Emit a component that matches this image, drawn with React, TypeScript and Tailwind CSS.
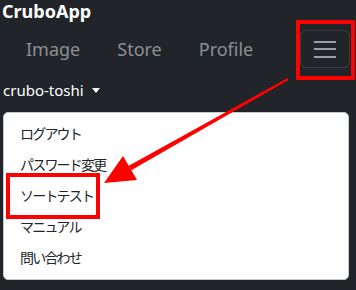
import React from 'react';

const menuItems = ['ログアウト', 'パスワード変更', 'ソートテスト', 'マニュアル', '問い合わせ'];
const navItems = ['Image', 'Store', 'Profile'];

// Red annotation: boxes and arrow drawn over the screenshot
function Annotation() {
  return (
    <svg className="pointer-events-none absolute inset-0" width="356" height="290" viewBox="0 0 356 290">
      <rect x="298" y="22" width="55" height="56" fill="none" stroke="#ff0000" strokeWidth="4" />
      <rect x="8" y="175" width="90" height="42" fill="none" stroke="#ff0000" strokeWidth="4" />
      <polygon points="288.5,79.9 287.5,78.1 128.8,165.8 131.2,170.2" fill="#ff0000" />
      <polygon points="104,183 123,156 137,180" fill="#ff0000" />
    </svg>
  );
}

export default function App() {
  return (
    <div
      className="relative flex h-[290px] w-[356px] flex-col overflow-hidden bg-[#212529] text-white"
      style={{ fontFamily: '"Noto Sans", "Noto Sans CJK JP", sans-serif' }}
    >
      {/* Brand */}
      <div className="h-[22px] pl-[2px] text-[18px] font-bold leading-[22px] text-white">CruboApp</div>

      {/* Nav row with toggler */}
      <div className="mt-[8px] flex h-[38px] items-center">
        <nav className="flex items-center gap-[37px] pl-[26px] text-[18px] text-[#8c8f93]">
          {navItems.map( ( item ) => (
            <span key={item}>{item}</span>
          ) )}
        </nav>
        <button className="ml-auto mr-[6px] flex h-[38px] w-[50px] flex-col items-center justify-center gap-[5.5px] rounded-[6px] border border-white/10">
          <span className="h-[2px] w-[22px] bg-[#9a9da1]" />
          <span className="h-[2px] w-[22px] bg-[#9a9da1]" />
          <span className="h-[2px] w-[22px] bg-[#9a9da1]" />
        </button>
      </div>

      {/* User dropdown toggle */}
      <div className="mt-[12px] flex h-[20px] items-center gap-[8px] pl-[3px] text-[15px] text-white">
        <span>crubo-toshi</span>
        <span className="h-0 w-0 border-x-[4px] border-t-[5px] border-x-transparent border-t-white" />
      </div>

      {/* Dropdown menu */}
      <div className="ml-[3px] mt-[12px] flex h-[168px] w-[346px] flex-col rounded-[5px] border border-[#c8c9ca] bg-white pt-[5px]">
        {menuItems.map( ( item ) => (
          <div
            key={item}
            className="flex h-[31px] items-center pl-[16px] text-[14px] tracking-[-1.8px] text-[#212529]"
            style={{ fontFamily: '"Noto Sans CJK JP", sans-serif' }}
          >
            {item}
          </div>
        ) )}
      </div>

      <Annotation />
    </div>
  );
}
